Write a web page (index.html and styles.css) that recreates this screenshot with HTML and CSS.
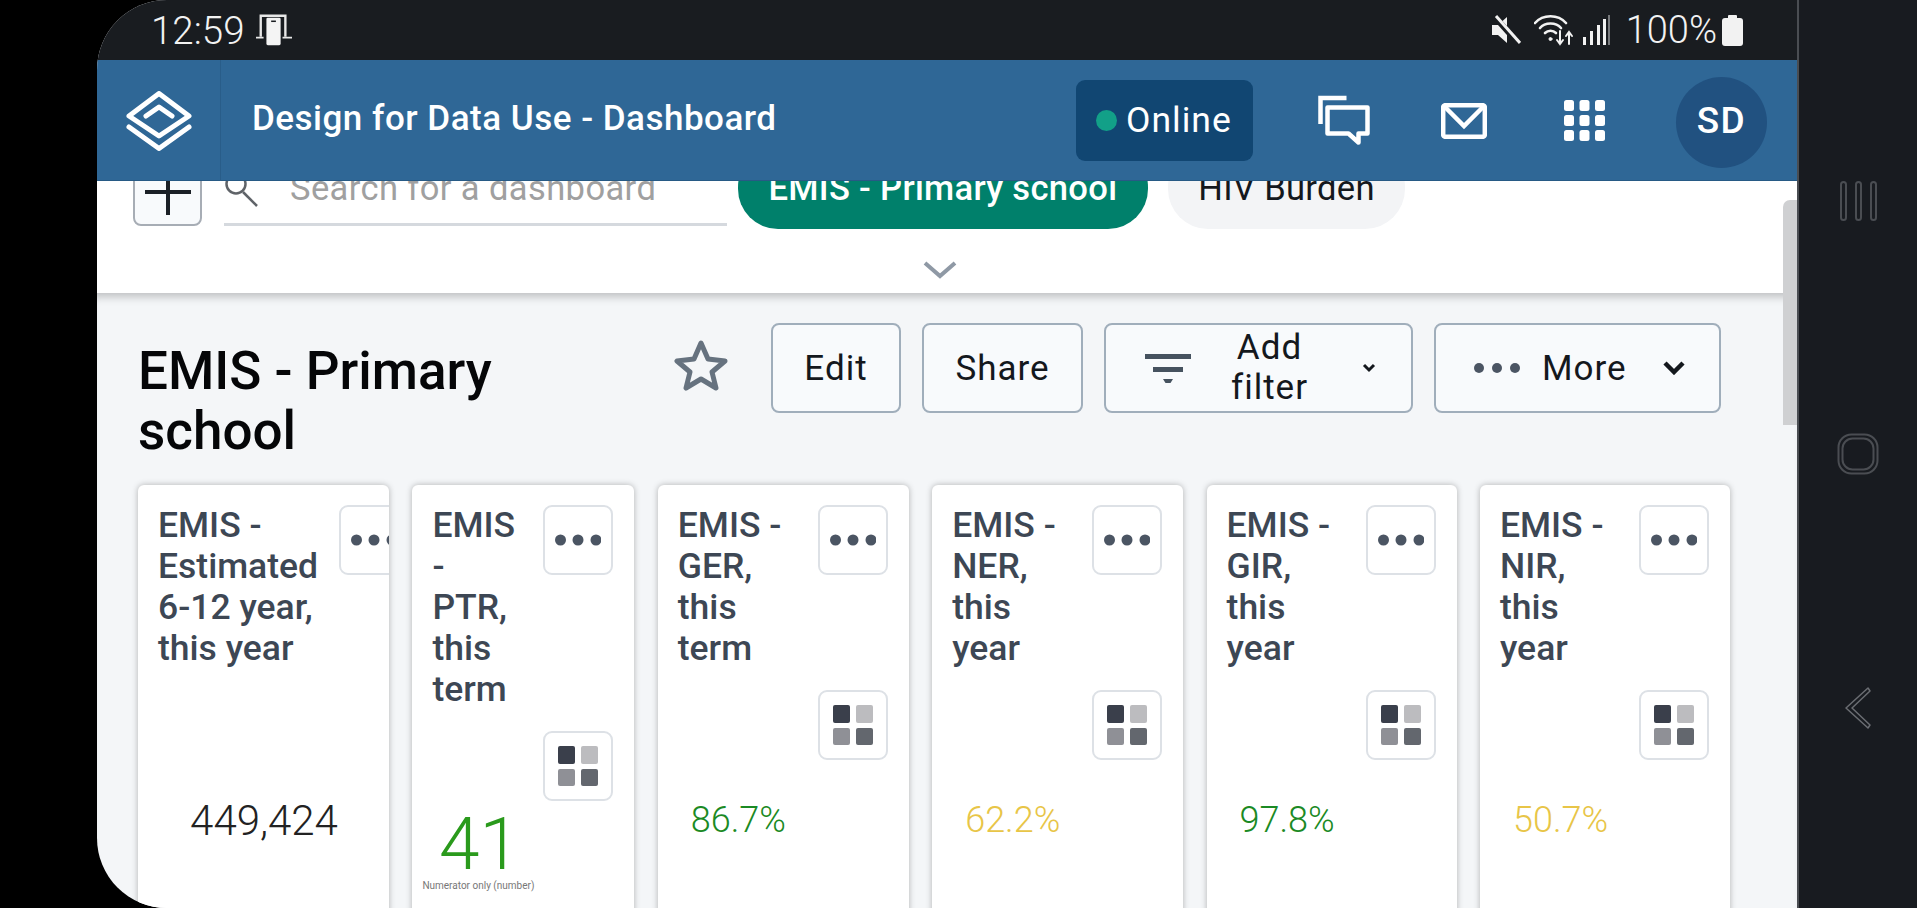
FILE: index.html
```html
<!DOCTYPE html>
<html lang="en">

<head>
    <meta charset="UTF-8">
    <meta name="viewport" content="width=device-width, initial-scale=1.0">
    <title>Design for Data Use - Dashboard</title>
    <link rel="stylesheet" href="styles.css">
</head>

<body>
    <div class="device">
        <div class="screen">
            <!-- Phone status bar -->
            <div class="status-bar">
                <div class="status-left">
                    <span class="status-time">12:59</span>
                    <svg class="status-device" width="36" height="34" viewBox="0 0 38 34">
                        <path d="M5 24V2h26v22" fill="none" stroke="#e8e8e8" stroke-width="2.5"/>
                        <path d="M0 25h8M28 25h10" stroke="#e8e8e8" stroke-width="2"/>
                        <rect x="11" y="4" width="15" height="29" rx="1.5" fill="#f4f4f4"/>
                        <rect x="16" y="7" width="5" height="1.6" fill="#191c20"/>
                    </svg>
                </div>
                <div class="status-right">
                    <svg class="status-mute" width="30" height="30" viewBox="0 0 30 30">
                        <path d="M1 10h6l9-8v26l-9-8H1z" fill="#f2f2f2"/>
                        <path d="M3 1l25 28" stroke="#191c20" stroke-width="6"/>
                        <path d="M5 1l24 27" stroke="#f2f2f2" stroke-width="3"/>
                    </svg>
                    <svg class="status-wifi" width="40" height="32" viewBox="0 0 40 32" fill="none" stroke="#f2f2f2" stroke-linecap="round">
                        <path d="M1 9C9 0 24 0 32 9" stroke-width="2.6"/>
                        <path d="M6 14c5-6 16-6 21 0" stroke-width="2.6"/>
                        <path d="M11 19c3-3 8-3 11 0" stroke-width="2.6"/>
                        <circle cx="16.500" cy="25" r="1.500" fill="#f2f2f2" stroke-width="1"/>
                        <path d="M26 17v13m-3-4l3 4 3-4M35 30V18m-3 4l3-4 3 4" stroke-width="2"/>
                    </svg>
                    <svg class="status-signal" width="27" height="30" viewBox="0 0 27 30">
                        <rect x="0" y="22" width="3" height="8" fill="#f2f2f2"/>
                        <rect x="7" y="16" width="3" height="14" fill="#f2f2f2"/>
                        <rect x="14" y="10" width="3" height="20" fill="#f2f2f2"/>
                        <rect x="20" y="4" width="3" height="26" fill="#f2f2f2"/>
                        <rect x="25" y="0" width="2" height="30" fill="#77797c"/>
                    </svg>
                    <span class="status-battery-text">100%</span>
                    <svg width="21" height="31" viewBox="0 0 21 31">
                        <rect x="6" y="0" width="9" height="4" rx="1" fill="#f2f2f2"/>
                        <rect x="0" y="3" width="21" height="28" rx="3" fill="#f2f2f2"/>
                    </svg>
                </div>
            </div>

            <!-- App header -->
            <header class="app-header">
                <div class="logo-box">
                    <svg width="66" height="60" viewBox="0 0 66 60" fill="none" stroke="#fff" stroke-width="5" stroke-linejoin="round" stroke-linecap="round">
                        <path d="M33 2.500L63 25 33 45 3 25z"/>
                        <path d="M20 25L33 16l13 9"/>
                        <path d="M3 36l30 21.500L63 36"/>
                    </svg>
                </div>
                <div class="app-title">Design for Data Use - Dashboard</div>
                <div class="online-badge"><span class="online-dot"></span>Online</div>
                <svg class="header-icon icon-chat" width="52" height="51" viewBox="0 0 52 51" fill="none" stroke="#fff" stroke-width="4.500">
                    <path d="M2.500 29V3h26"/>
                    <path d="M9.500 12.500h40v26h-9v9l-10-9h-21z" stroke-linejoin="round"/>
                </svg>
                <svg class="header-icon icon-mail" width="46" height="36" viewBox="0 0 46 36" fill="none" stroke="#fff" stroke-width="4.500">
                    <rect x="2.200" y="2.200" width="41.600" height="31.600" rx="2"/>
                    <path d="M3 3l20 20L43 3"/>
                </svg>
                <svg class="header-icon icon-apps" width="41" height="41" viewBox="0 0 41 41" fill="#fff">
                    <rect x="0" y="0" width="10" height="11" rx="2.500"/>
                    <rect x="15.500" y="0" width="10" height="11" rx="2.500"/>
                    <rect x="31" y="0" width="10" height="11" rx="2.500"/>
                    <rect x="0" y="15" width="10" height="11" rx="2.500"/>
                    <rect x="15.500" y="15" width="10" height="11" rx="2.500"/>
                    <rect x="31" y="15" width="10" height="11" rx="2.500"/>
                    <rect x="0" y="30" width="10" height="11" rx="2.500"/>
                    <rect x="15.500" y="30" width="10" height="11" rx="2.500"/>
                    <rect x="31" y="30" width="10" height="11" rx="2.500"/>
                </svg>
                <div class="avatar">SD</div>
            </header>

            <div class="page">
                <!-- Dashboard chooser, scrolled a little so its top is under the header -->
                <div class="chooser">
                    <div class="chooser-row">
                        <div class="add-btn">
                            <svg width="46" height="46" viewBox="0 0 46 46">
                                <path d="M0 23h46M23 0v46" stroke="#1b2026" stroke-width="4"/>
                            </svg>
                        </div>
                        <div class="search">
                            <svg width="36" height="36" viewBox="0 0 36 36" fill="none" stroke="#5f6368" stroke-width="2.500">
                                <circle cx="12" cy="10" r="9.500"/>
                                <path d="M19 18l14 14"/>
                            </svg>
                            <span class="search-text">Search for a dashboard</span>
                        </div>
                        <div class="pill pill-active">EMIS - Primary school</div>
                        <div class="pill">HIV Burden</div>
                    </div>
                    <div class="chooser-toggle">
                        <svg width="34" height="18" viewBox="0 0 34 18" fill="none" stroke="#8f99a5" stroke-width="4">
                            <path d="M2 2l15 13L32 2"/>
                        </svg>
                    </div>
                </div>

                <!-- Dashboard -->
                <div class="dashboard">
                    <div class="dash-head">
                        <h1 class="dash-title">EMIS - Primary school</h1>
                        <svg class="star" width="56" height="52" viewBox="0 0 56 52" fill="none" stroke="#66727f" stroke-width="5" stroke-linejoin="round">
                            <path d="M28 4l7 16 17 2-13 11 4 16-15-9-15 9 4-16L4 22l17-2z"/>
                        </svg>
                        <button class="btn btn-edit">Edit</button>
                        <button class="btn btn-share">Share</button>
                        <button class="btn btn-filter">
                            <svg width="46" height="29" viewBox="0 0 46 29" fill="#46525f">
                                <rect x="0" y="0" width="46" height="5"/>
                                <rect x="8" y="13" width="30" height="5"/>
                                <path d="M18 25h10l-2.500 4h-5z"/>
                            </svg>
                            <span class="btn-filter-label">Add filter</span>
                            <svg width="14" height="10" viewBox="0 0 14 10" fill="none" stroke="#14181d" stroke-width="3">
                                <path d="M2 2l5 5 5-5"/>
                            </svg>
                        </button>
                        <button class="btn btn-more">
                            <svg width="46" height="12" viewBox="0 0 46 12" fill="#4b5563">
                                <circle cx="5" cy="6" r="5"/>
                                <circle cx="23" cy="6" r="5"/>
                                <circle cx="41" cy="6" r="5"/>
                            </svg>
                            <span class="btn-more-label">More</span>
                            <svg width="22" height="14" viewBox="0 0 22 14" fill="none" stroke="#14181d" stroke-width="4.500">
                                <path d="M2 2l9 9 9-9"/>
                            </svg>
                        </button>
                    </div>

                    <div class="cards" id="cards"></div>
                </div>
            </div>

            <div class="scroll-thumb"></div>
        </div>

        <!-- Phone navigation bar -->
        <div class="nav-bar">
            <svg width="37" height="40" viewBox="0 0 37 40" fill="none" stroke="#4a4d52" stroke-width="2">
                <rect x="1" y="1" width="5" height="38" rx="2.500"/>
                <rect x="16" y="1" width="5" height="38" rx="2.500"/>
                <rect x="31" y="1" width="5" height="38" rx="2.500"/>
            </svg>
            <svg width="42" height="42" viewBox="0 0 42 42" fill="none" stroke="#4a4d52" stroke-width="2">
                <rect x="1.500" y="1.500" width="39" height="39" rx="13"/>
                <rect x="5.500" y="5.500" width="31" height="31" rx="10"/>
            </svg>
            <svg width="28" height="42" viewBox="0 0 28 42" fill="none" stroke="#6a6d72" stroke-width="1.500" stroke-linejoin="round">
                <path d="M24 1L2 21l22 20 2-3L8 21 26 4z"/>
            </svg>
        </div>
    </div>

    <script>
        // Card data for the dashboard
        const cards = [
            { title: "EMIS - Estimated 6-12 year, this year", value: "449,424", kind: "plain", overflow: true },
            { title: "EMIS - PTR, this term", value: "41", kind: "big" },
            { title: "EMIS - GER, this term", value: "86.7%", kind: "good" },
            { title: "EMIS - NER, this year", value: "62.2%", kind: "warn" },
            { title: "EMIS - GIR, this year", value: "97.8%", kind: "good" },
            { title: "EMIS - NIR, this year", value: "50.7%", kind: "warn" }
        ];

        const dots = `<svg width="46" height="12" viewBox="0 0 46 12" fill="#4b5563">
            <circle cx="5.500" cy="6" r="5.500"/><circle cx="23" cy="6" r="5.500"/><circle cx="41" cy="6" r="5.500"/></svg>`;
        const tiles = `<svg width="40" height="40" viewBox="0 0 40 40">
            <rect x="0" y="0" width="17" height="18" rx="2" fill="#3a3f4b"/>
            <rect x="23" y="0" width="17" height="18" rx="2" fill="#bcbcbf"/>
            <rect x="0" y="23" width="17" height="17" rx="2" fill="#8f9096"/>
            <rect x="23" y="23" width="17" height="17" rx="2" fill="#63676e"/></svg>`;

        document.getElementById("cards").innerHTML = cards.map(card => `
            <div class="card card-${card.kind}">
                <div class="card-top">
                    <div class="card-head">
                        <div class="card-title">${card.title}</div>
                        <div class="card-btn">${dots}</div>
                    </div>
                    ${card.overflow ? "" : `<div class="card-btn card-btn-view">${tiles}</div>`}
                </div>
                <div class="card-value">
                    <div class="value-number">${card.value}</div>
                    ${card.kind === "big" ? '<div class="value-caption">Numerator only (number)</div>' : ""}
                </div>
            </div>`).join("");
    </script>
</body>

</html>
```

FILE: styles.css
```css
* {
    box-sizing: border-box;
}

html, body {
    margin: 0;
    padding: 0;
    height: 100%;
    overflow: hidden;
    background-color: #000;
    font-family: Roboto, Arial, sans-serif;
}

.device {
    display: flex;
    height: 908px;
    padding-left: 97px;
}

.screen {
    position: relative;
    display: flex;
    flex-direction: column;
    width: 1700px;
    height: 100%;
    overflow: hidden;
    border-radius: 70px 0 0 70px;
    background-color: #f4f6f8;
}

/* status bar */
.status-bar {
    display: flex;
    justify-content: space-between;
    align-items: center;
    flex: 0 0 60px;
    padding: 0 54px 0 54px;
    background-color: #191c20;
    color: #f2f2f2;
}

.status-left, .status-right {
    display: flex;
    align-items: center;
}

.status-time {
    font-size: 38.500px;
    font-weight: 300;
    margin-right: 11px;
}

.status-mute {
    margin-right: 13px;
}

.status-wifi {
    margin-right: 9px;
}

.status-signal {
    margin-right: 16px;
}

.status-battery-text {
    font-size: 38px;
    font-weight: 300;
    margin-right: 5px;
}

/* header */
.app-header {
    display: flex;
    align-items: center;
    flex: 0 0 121px;
    background-color: #2f6796;
    color: #fff;
    box-shadow: inset 0 -1px 0 #275a85;
}

.logo-box {
    display: flex;
    justify-content: center;
    align-items: center;
    width: 124px;
    height: 100%;
    border-right: 1px solid #295d89;
    flex-shrink: 0;
}

.app-title {
    flex: 1;
    margin-left: 31px;
    padding-bottom: 4px;
    font-size: 35px;
    font-weight: 500;
    letter-spacing: 0.5px;
}

.online-badge {
    display: flex;
    align-items: center;
    width: 177px;
    height: 81px;
    margin-bottom: 1px;
    padding-left: 20px;
    border-radius: 9px;
    background-color: #114672;
    font-size: 35.500px;
    letter-spacing: 1px;
}

.online-dot {
    width: 21px;
    height: 21px;
    margin-right: 9px;
    border-radius: 50%;
    background-color: #12a088;
}

.header-icon {
    flex-shrink: 0;
}

.icon-chat {
    margin-left: 65px;
}

.icon-mail {
    margin-left: 71px;
}

.icon-apps {
    margin-left: 77px;
}

.avatar {
    display: flex;
    justify-content: center;
    align-items: center;
    width: 91px;
    height: 91px;
    margin: 4px 30px 0 71px;
    padding-bottom: 4px;
    border-radius: 50%;
    background-color: #215180;
    font-size: 37px;
    font-weight: 500;
    letter-spacing: 1.5px;
}

/* page */
.page {
    flex: 1;
    min-height: 0;
    overflow: hidden;
}

.chooser {
    height: 112px;
    overflow: hidden;
    background-color: #fff;
}

.chooser-row {
    display: flex;
    align-items: flex-end;
    height: 82px;
    margin-top: -34px;
    padding-left: 36px;
}

.add-btn {
    display: flex;
    justify-content: center;
    align-items: center;
    flex: 0 0 69px;
    height: 69px;
    margin-bottom: 3px;
    border: 2px solid #a7adb5;
    border-radius: 8px;
    background-color: #f8fafc;
}

.search {
    display: flex;
    align-items: flex-start;
    flex: 0 0 503px;
    height: 82px;
    margin-left: 22px;
    padding-top: 18px;
    margin-bottom: 3px;
    border-bottom: 3px solid #d5d9de;
}

.search svg {
    margin: 12px 0 0 0;
}

.search-text {
    margin: 6px 0 0 30px;
    font-size: 34.500px;
    color: #a0a0a0;
    letter-spacing: 0.4px;
}

.pill {
    display: flex;
    justify-content: center;
    align-items: center;
    height: 82px;
    padding: 0 30.500px;
    margin-left: 20px;
    border-radius: 40px;
    background-color: #f3f4f6;
    font-size: 34.600px;
    color: #14181d;
    letter-spacing: 0.3px;
    white-space: nowrap;
}

.pill-active {
    margin-left: 11px;
    background-color: #00806b;
    color: #fff;
    font-weight: 500;
}

.chooser-toggle {
    display: flex;
    justify-content: center;
    width: 1686px;
    margin-top: 32px;
}

.dashboard {
    padding-top: 30px;
    box-shadow: inset 0 10px 9px -6px rgba(0, 0, 0, 0.22);
}

.dash-head {
    display: flex;
    align-items: flex-start;
    padding-left: 41px;
}

.dash-title {
    flex: 0 0 535px;
    margin: 18px 0 0 0;
    padding-right: 60px;
    font-size: 53px;
    font-weight: 500;
    line-height: 60px;
    color: #050608;
}

.star {
    flex-shrink: 0;
    margin: 16px 42px 0 0;
}

.btn {
    display: flex;
    align-items: center;
    justify-content: center;
    height: 90px;
    margin-right: 21px;
    border: 2px solid #a0aebb;
    border-radius: 8px;
    background-color: #f8fafc;
    font-family: inherit;
    font-size: 35px;
    color: #14181d;
    letter-spacing: 1px;
}

.btn-edit {
    width: 130px;
}

.btn-share {
    width: 161px;
}

.btn-filter {
    justify-content: flex-start;
    width: 309px;
    padding: 0 35px 0 39px;
}

.btn-filter-label {
    flex: 1;
    padding: 0 44px 0 30px;
    line-height: 40px;
    text-align: center;
}

.btn-more {
    justify-content: flex-start;
    width: 287px;
    margin-right: 0;
    padding: 0 34px 0 38px;
}

.btn-more-label {
    flex: 1;
    padding-left: 22px;
    text-align: left;
}

.cards {
    display: grid;
    grid-template-columns: 251px 222px 251px 251px 250px 250px;
    column-gap: 23.400px;
    margin: 24px 0 0 41px;
}

.card {
    height: 600px;
    overflow: hidden;
    padding: 20px 21px 0 20px;
    border-radius: 6px;
    background-color: #fff;
    box-shadow: 0 0 6px rgba(0, 0, 0, 0.28);
}

.card-top {
    display: flex;
    flex-direction: column;
    align-items: flex-end;
    min-height: 255px;
}

.card-head {
    display: flex;
    width: 100%;
}

.card-title {
    flex: 1;
    margin-right: 21px;
    font-size: 35.500px;
    font-weight: 500;
    line-height: 41px;
    color: #3d4754;
}

.card-btn {
    display: flex;
    justify-content: center;
    align-items: center;
    flex: 0 0 70px;
    width: 70px;
    height: 70px;
    border: 2px solid #dde1e6;
    border-radius: 9px;
    background-color: #fff;
}

.card-btn-view {
    margin-top: 21px;
}

.card-value {
    display: flex;
    flex-direction: column;
    height: 120px;
    justify-content: center;
    padding-left: 13px;
    font-weight: 300;
}

.value-number {
    font-size: 36px;
}

.card-plain .card-value {
    align-items: center;
    padding-left: 0;
    margin-left: 2px;
}

.card-plain .value-number {
    font-size: 42px;
    color: #222;
}

.card-good .value-number {
    color: #1b8a24;
}

.card-warn .value-number {
    color: #e8c547;
}

.card-big .card-value {
    display: block;
    height: auto;
    width: 110px;
    margin-left: -10px;
    padding-left: 0;
    text-align: center;
}

.card-big .value-number {
    margin-top: 8px;
    padding-left: 4px;
    font-size: 73px;
    line-height: 70px;
    color: #2a9a1c;
}

.value-caption {
    font-size: 10px;
    line-height: 14px;
    font-weight: 400;
    color: #777;
    white-space: nowrap;
}

.scroll-thumb {
    position: absolute;
    top: 200px;
    right: 0;
    width: 14px;
    height: 225px;
    border-radius: 7px 0 0 0;
    background-color: #cfd0d2;
}

/* nav bar */
.nav-bar {
    display: flex;
    flex-direction: column;
    justify-content: space-between;
    align-items: center;
    flex: 0 0 120px;
    height: 100%;
    padding: 181px 0 179px 0;
    border-left: 2px solid #4a4d52;
    background-color: #181b20;
}
```
